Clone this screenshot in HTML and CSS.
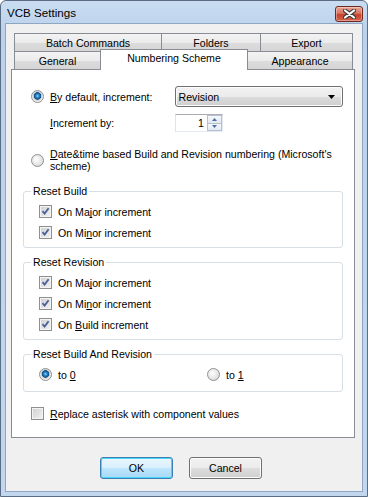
FILE: index.html
```html
<!DOCTYPE html>
<html lang="en">
<head>
    <meta charset="UTF-8">
    <title>VCB Settings</title>
    <link rel="stylesheet" href="styles.css">
</head>
<body>
    <div class="window">
        <div class="titlebar">
            <span class="title">VCB Settings</span>
            <span class="close">
                <svg width="13" height="10" viewBox="0 0 13 10">
                    <path d="M2 1.5 L11 8.5 M11 1.5 L2 8.5" stroke="#3b3b3b" stroke-width="4.2" stroke-linecap="round"/>
                    <path d="M2 1.5 L11 8.5 M11 1.5 L2 8.5" stroke="#fff" stroke-width="2.2" stroke-linecap="round"/>
                </svg>
            </span>
        </div>

        <div class="client">
            <div class="tabs">
                <div class="tabrow">
                    <div class="tab t-batch">Batch Commands</div>
                    <div class="tab t-folders">Folders</div>
                    <div class="tab t-export">Export</div>
                </div>
                <div class="tabrow front">
                    <div class="tab t-general">General</div>
                    <div class="tab active">Numbering Scheme</div>
                    <div class="tab t-appearance">Appearance</div>
                </div>
            </div>

            <div class="panel">
                <div class="opt row-default">
                    <span class="radio on"></span>
                    <span class="label wide"><u>B</u>y default, increment:</span>
                    <div class="combo">
                        <span>Revision</span>
                        <svg width="7" height="4" viewBox="0 0 7 4"><path d="M0 0 H7 L3.5 4 Z" fill="#000"/></svg>
                    </div>
                </div>

                <div class="row-step">
                    <span class="label wide"><u>I</u>ncrement by:</span>
                    <div class="spin">
                        <span class="spin-value">1</span>
                        <div class="spin-btns">
                            <span class="spin-btn"><svg width="5" height="3" viewBox="0 0 5 3"><path d="M0 3 L2.5 0 L5 3 Z" fill="#4a6ea8"/></svg></span>
                            <span class="spin-btn"><svg width="5" height="3" viewBox="0 0 5 3"><path d="M0 0 H5 L2.5 3 Z" fill="#4a6ea8"/></svg></span>
                        </div>
                    </div>
                </div>

                <div class="opt row-date">
                    <span class="radio"></span>
                    <span class="label two-lines"><u>D</u>ate&amp;time based Build and Revision numbering (Microsoft's<br>scheme)</span>
                </div>

                <div class="group g-build">
                    <span class="group-title">Reset Build</span>
                    <div class="check-row"><span class="check on"></span><span>On Ma<u>j</u>or increment</span></div>
                    <div class="check-row"><span class="check on"></span><span>On Mi<u>n</u>or increment</span></div>
                </div>

                <div class="group g-revision">
                    <span class="group-title">Reset Revision</span>
                    <div class="check-row"><span class="check on"></span><span>On Ma<u>j</u>or increment</span></div>
                    <div class="check-row"><span class="check on"></span><span>On Mi<u>n</u>or increment</span></div>
                    <div class="check-row"><span class="check on"></span><span>On <u>B</u>uild increment</span></div>
                </div>

                <div class="group g-both">
                    <span class="group-title">Reset Build And Revision</span>
                    <div class="radio-pair">
                        <div class="check-row"><span class="radio on"></span><span>to <u>0</u></span></div>
                        <div class="check-row"><span class="radio"></span><span>to <u>1</u></span></div>
                    </div>
                </div>

                <div class="opt row-replace">
                    <span class="check"></span>
                    <span class="label"><u>R</u>eplace asterisk with component values</span>
                </div>
            </div>

            <div class="buttons">
                <button class="btn default">OK</button>
                <button class="btn">Cancel</button>
            </div>
        </div>
    </div>
</body>
</html>
```

FILE: styles.css
```css
* {
    box-sizing: border-box;
}
body {
    margin: 0;
    background: #fff;
    font-family: "Liberation Sans", Arial, sans-serif;
    font-size: 10.6px;
    color: #000;
}
u {
    text-decoration: underline;
    text-underline-offset: 1px;
    text-decoration-skip-ink: none;
}

/* window frame */
.window {
    width: 368px;
    height: 497px;
    border: 1px solid #5b6d85;
    border-radius: 6px 6px 0 0;
    background: linear-gradient(#c9dcf1, #bcd2ec 30px, #c2d6ee);
    display: flex;
    flex-direction: column;
}
.titlebar {
    height: 22px;
    display: flex;
    align-items: center;
    justify-content: space-between;
    padding: 0 4px 0 6px;
}
.title {
    font-size: 11.6px;
    color: #000;
    margin-top: 1px;
}
.close {
    width: 28px;
    height: 16px;
    margin-top: 3px;
    border: 1px solid #6d2a20;
    border-radius: 3px;
    background: linear-gradient(#e8a594, #d8735e 45%, #c7402b 55%, #d8654d);
    display: flex;
    align-items: center;
    justify-content: center;
    box-shadow: inset 0 0 0 1px rgba(255, 255, 255, 0.35);
}
.client {
    flex: 1;
    margin: 0 4px 4px;
    border: 1px solid #8fa6c3;
    background: #f0f0f0;
    padding-top: 9px;
}

/* tabs */
.tabs {
    margin-left: 8px;
    width: 339px;
}
.tabrow {
    display: flex;
    height: 19px;
}
.tabrow.front {
    margin-top: -1px;
    height: 18px;
    align-items: flex-end;
}
.tab {
    height: 19px;
    border: 1px solid #898c95;
    margin-left: -1px;
    background: linear-gradient(#f3f3f3, #ebebeb 50%, #dcdcdc 51%, #d5d5d5);
    display: flex;
    align-items: center;
    justify-content: center;
    padding-top: 1px;
}
.tab:first-child {
    margin-left: 0;
}
.front .tab {
    height: 18px;
    border-bottom: none;
}
.t-batch { width: 148px; }
.t-folders { width: 100px; }
.t-export { width: 93px; }
.t-general { width: 87px; }
.t-appearance { width: 106px; }
.front .t-general,
.front .t-appearance {
    padding-top: 0;
}
.front .tab.active {
    position: relative;
    z-index: 1;
    width: 148px;
    height: 21px;
    margin-bottom: -1px;
    background: #fff;
    align-items: flex-start;
    padding-top: 2px;
}

/* page */
.panel {
    margin-left: 5px;
    width: 344px;
    height: 369px;
    border: 1px solid #898c95;
    background: #fff;
    padding: 16px 11px 0;
}
.opt {
    display: flex;
    align-items: center;
    padding-left: 8px;
}
.label.wide {
    width: 125px;
}
.row-default {
    height: 21px;
}
.row-default .radio,
.row-date .radio,
.row-replace .check {
    margin-right: 6px;
}
.combo {
    width: 169px;
    height: 21px;
    border: 1px solid #707070;
    border-radius: 3px;
    background: linear-gradient(#f2f2f2, #ebebeb 50%, #dddddd 51%, #cfcfcf);
    display: flex;
    align-items: center;
    justify-content: space-between;
    padding: 0 7px 0 3px;
    box-shadow: inset 0 0 0 1px #fcfcfc;
}
.row-step {
    display: flex;
    align-items: center;
    margin-top: 7px;
    height: 18px;
    padding-left: 27px;
}
.spin {
    width: 48px;
    height: 18px;
    border: 1px solid #abadb3;
    border-color: #abadb3 #e3e9ef #e3e9ef #e2e3ea;
    display: flex;
}
.spin-value {
    flex: 1;
    text-align: right;
    padding-right: 3px;
    line-height: 16px;
}
.spin-btns {
    width: 15px;
    display: flex;
    flex-direction: column;
}
.spin-btn {
    flex: 1;
    border: 1px solid #b5c0d0;
    background: linear-gradient(#f6f8fb, #e3e8f0);
    display: flex;
    align-items: center;
    justify-content: center;
}
.spin-btn + .spin-btn {
    border-top: none;
}
.row-date {
    margin-top: 16px;
}
.two-lines {
    line-height: 12px;
}

/* radio and check glyphs */
.radio {
    flex: none;
    width: 13px;
    height: 13px;
    border-radius: 50%;
    border: 1px solid #8e8f8f;
    background: radial-gradient(circle at 40% 40%, #ffffff, #e3e3e3 60%, #d0d0d0);
}
.radio.on {
    background: radial-gradient(circle at 50% 45%, #9fdcf8 0, #2d88c9 1.5px, #0d4f8b 3.5px, #c7c7c7 4px, #f2f2f2 5.5px);
}
.check {
    flex: none;
    width: 13px;
    height: 13px;
    border: 1px solid #8e8f8f;
    background: linear-gradient(135deg, #cfd0d2, #f2f2f2);
    box-shadow: inset 0 0 0 1px #f4f4f4;
}
.check.on {
    background: url("data:image/svg+xml,%3Csvg xmlns='http://www.w3.org/2000/svg' width='11' height='11'%3E%3Cpath d='M2.5 5.2 L4.6 7.6 L8.6 2.2' fill='none' stroke='%234a5f99' stroke-width='1.8'/%3E%3C/svg%3E") center no-repeat,
        linear-gradient(135deg, #cfd0d2, #f2f2f2);
}

/* groups */
.group {
    border: 1px solid #d5dfe5;
    border-radius: 3px;
    padding: 0 0 4px 15px;
    display: flex;
    flex-direction: column;
}
.group-title {
    align-self: flex-start;
    margin: -7px 0 3px -8px;
    padding: 0 2px;
    line-height: 13px;
    background: #fff;
}
.check-row {
    height: 21px;
    display: flex;
    align-items: center;
}
.check-row .check,
.check-row .radio {
    margin-right: 6px;
}
.g-build {
    margin-top: 19px;
}
.g-revision {
    margin-top: 14px;
}
.g-both {
    margin-top: 14px;
    padding-bottom: 6px;
}
.radio-pair {
    display: grid;
    grid-template-columns: 168px 1fr;
}
.row-replace {
    margin-top: 11px;
    height: 21px;
}

/* buttons */
.buttons {
    display: flex;
    justify-content: center;
    gap: 16px;
    margin-top: 19px;
    margin-left: -6px;
}
.btn {
    width: 73px;
    height: 22px;
    font-family: inherit;
    font-size: 10.6px;
    color: #000;
    border: 1px solid #707070;
    border-radius: 3px;
    background: linear-gradient(#f2f2f2, #ebebeb 50%, #dddddd 51%, #cfcfcf);
    box-shadow: inset 0 0 0 1px #fcfcfc;
    padding: 0;
}
.btn.default {
    border-color: #3c7fb1;
    box-shadow: inset 0 0 0 1px #48d7fb;
    background: linear-gradient(#eaf6fd, #d9f0fc 50%, #bee6fd 51%, #a7d9f5);
}
```
